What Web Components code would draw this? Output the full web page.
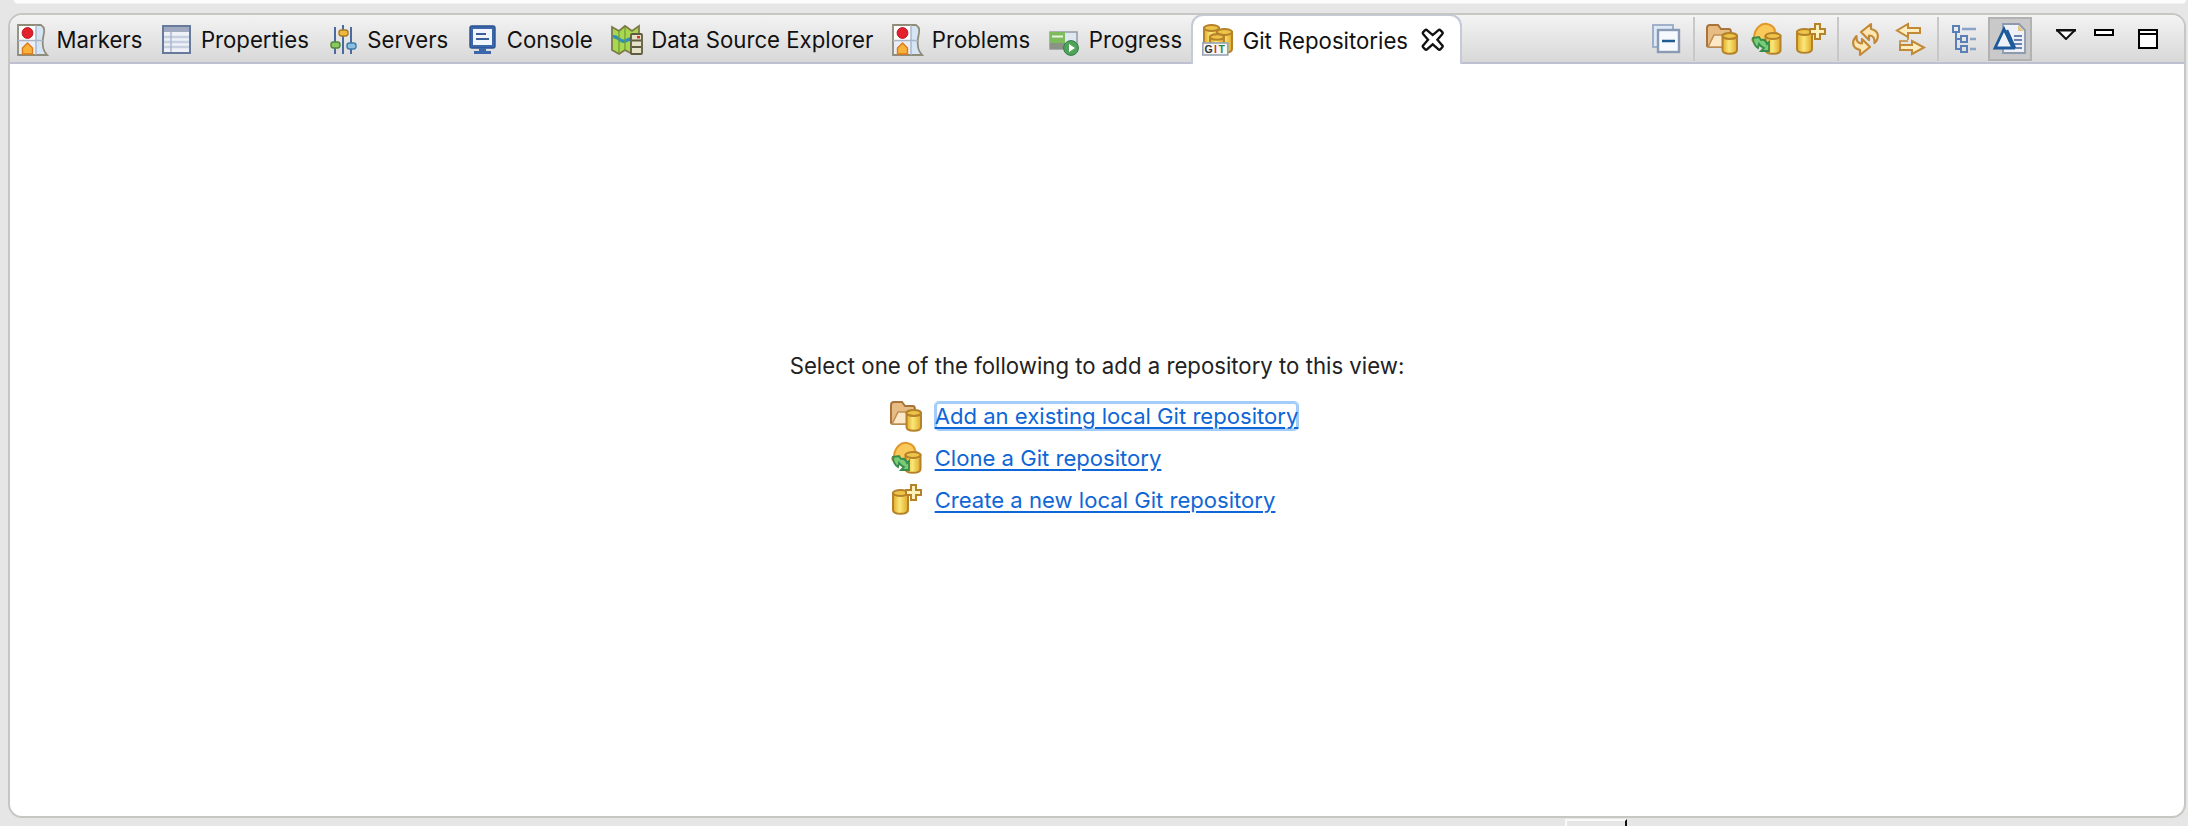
<!DOCTYPE html>
<html>
<head>
<meta charset="utf-8">
<title>Git Repositories</title>
<style>
  html, body { margin: 0; padding: 0; background: #e6e6e6; overflow: hidden; }
  body { height: 826px; font-family: Inter, "Liberation Sans", sans-serif; color: #111; }
</style>
</head>
<body>
<workbench-shell>
  <view-panel>
    <view-tab slot="tabs" icon="markers" label="Markers"></view-tab>
    <view-tab slot="tabs" icon="properties" label="Properties"></view-tab>
    <view-tab slot="tabs" icon="servers" label="Servers"></view-tab>
    <view-tab slot="tabs" icon="console" label="Console"></view-tab>
    <view-tab slot="tabs" icon="datasource" label="Data Source Explorer"></view-tab>
    <view-tab slot="tabs" icon="markers" label="Problems"></view-tab>
    <view-tab slot="tabs" icon="progress" label="Progress"></view-tab>
    <view-tab slot="tabs" icon="git" label="Git Repositories" active></view-tab>

    <tool-button slot="tools" icon="collapse"></tool-button>
    <tool-sep slot="tools"></tool-sep>
    <tool-button slot="tools" icon="folder"></tool-button>
    <tool-button slot="tools" icon="clone"></tool-button>
    <tool-button slot="tools" icon="create"></tool-button>
    <tool-sep slot="tools"></tool-sep>
    <tool-button slot="tools" icon="sync"></tool-button>
    <tool-button slot="tools" icon="arrows"></tool-button>
    <tool-sep slot="tools"></tool-sep>
    <tool-button slot="tools" icon="tree"></tool-button>
    <tool-button slot="tools" icon="link" pressed></tool-button>

    <window-controls slot="controls"></window-controls>

    <empty-repos>
      <repo-link icon="folder" focused>Add an existing local Git repository</repo-link>
      <repo-link icon="clone">Clone a Git repository</repo-link>
      <repo-link icon="create">Create a new local Git repository</repo-link>
    </empty-repos>
  </view-panel>
</workbench-shell>

<script>
  // gold cylinder used by most of the git icons
  const cyl = (x, y, w, h) => {
    const ry = w * 0.2;
    return `<path d="M${x} ${y}V${y + h - ry}C${x} ${y + h + ry * .7} ${x + w} ${y + h + ry * .7} ${x + w} ${y + h - ry}V${y}Z" fill="url(#gold)" stroke="#b5822a" stroke-width="2"/>
      <ellipse cx="${x + w / 2}" cy="${y}" rx="${w / 2}" ry="${ry}" fill="#eec448" stroke="#b5822a" stroke-width="2"/>`;
  };

  const swoosh = `M21 1L11 9L19 17V12.5C23 12.5 25 15 24.5 20C29 15.5 30 8 21 6Z`;

  const ICONS = {
    markers: `
      <path d="M2 1H25C30 4 28 9 27 14C26 21 27 27 31 31H2Z" fill="#d6e5f5" stroke="#8f8c78" stroke-width="1.8"/>
      <rect x="3" y="2" width="17" height="14" fill="#fff"/>
      <rect x="3" y="17" width="17" height="13" fill="#e9eef6"/>
      <path d="M20 1V31M2 16.5H27" stroke="#a9b4c4" stroke-width="1.4"/>
      <circle cx="11.5" cy="9" r="5.4" fill="#e3202c" stroke="#b81820"/>
      <path d="M11.5 19L16.5 24V30H6.5V24Z" fill="#f6b23a" stroke="#e07a18" stroke-width="1.4"/>`,
    properties: `
      <rect x="3" y="2" width="27" height="27" fill="#eef1f7" stroke="#687a9c" stroke-width="2"/>
      <rect x="4" y="3" width="25" height="5" fill="#a0a9bf"/>
      <path d="M4 13H29M4 18H29M4 23H29" stroke="#c6cfe0" stroke-width="2.4"/>
      <path d="M11 8V28" stroke="#aab4c8" stroke-width="1.4"/>`,
    servers: `
      <path d="M8 3V30M16 1V30M24 3V30" stroke="#4a6aa0" stroke-width="2"/>
      <rect x="4" y="18" width="9" height="6" rx="2.4" fill="#8cc860" stroke="#4d8a38" stroke-width="1.4"/>
      <rect x="12" y="6" width="9" height="6" rx="2.4" fill="#eeb840" stroke="#a87c20" stroke-width="1.4"/>
      <rect x="20" y="19" width="9" height="6" rx="2.4" fill="#8cc0e0" stroke="#3f7aa8" stroke-width="1.4"/>`,
    console: `
      <rect x="4" y="2" width="25" height="22" rx="2" fill="#3b67ab" stroke="#2d5290" stroke-width="1.4"/>
      <rect x="7" y="5" width="19" height="16" fill="#f2f5fb"/>
      <path d="M10 10H20M10 15H23" stroke="#3b5f9c" stroke-width="2"/>
      <path d="M13 24H20V27H25V30H8V27H13Z" fill="#3b67ab"/>`,
    datasource: `
      <path d="M1 3L8 7L14 2L21 7L28 2V20H23V28L21 30L14 26L8 30L1 26Z" fill="#a8d850" stroke="#7d7a48" stroke-width="1.8"/>
      <path d="M2 13C7 11 9 19 14 17S19 14 23 15" stroke="#2f8fb8" stroke-width="3.4" fill="none"/>
      <path d="M8 7V29M14 3V26" stroke="#6f9a30" stroke-width="1.2"/>
      <rect x="20" y="10" width="11" height="20" rx="1" fill="#e6e2c8" stroke="#5f5a40" stroke-width="1.8"/>
      <path d="M21 16.5H30M21 23H30" stroke="#5f5a40" stroke-width="1.8"/>
      <rect x="26" y="12" width="3" height="2.4" fill="#d83030"/>`,
    progress: `
      <rect x="2" y="8" width="27" height="17" fill="#dfe7f0" stroke="#8e969e" stroke-width="1.4"/>
      <rect x="2" y="8" width="15" height="11" fill="#7dbb5c"/>
      <path d="M4 12.5H15" stroke="#eaf6e0" stroke-width="2.2"/>
      <rect x="2" y="19" width="17" height="6" fill="#8b9484"/>
      <circle cx="23" cy="24" r="7.4" fill="#4fa45a" stroke="#2f7c40"/>
      <path d="M21 20L27 24L21 28Z" fill="#fff"/>`,
    git: `
      ${cyl(2, 4, 15, 18)}
      ${cyl(15, 8, 15, 20)}
      ${cyl(8, 13, 14, 10)}
      <rect x="0.8" y="19" width="25" height="12" fill="#f6f6f6" stroke="#98a4b4" stroke-width="1.6"/>
      <text x="13.4" y="29" text-anchor="middle" font-family="'Liberation Sans',sans-serif" font-weight="700" font-size="10.5" letter-spacing="1.4"><tspan fill="#333">G</tspan><tspan fill="#d8302c">I</tspan><tspan fill="#2f8a3c">T</tspan></text>`,
    collapse: `
      <rect x="3" y="2" width="20" height="22" fill="#dfe9f6" stroke="#9fb0c8" stroke-width="2"/>
      <rect x="8" y="7" width="21" height="22" fill="#f6f9fd" stroke="#8a9ab4" stroke-width="2.4"/>
      <path d="M12 18H25" stroke="#1f5a92" stroke-width="2.6"/>`,
    folder: `
      <path d="M1 23V5C1 3 2 2 4 2H12L15 6H23C25 6 25 8 25 12V24H3Z" fill="#e6bc82" stroke="#a9743a" stroke-width="2"/>
      <path d="M2 24L8 12H25L21 24Z" fill="#fce8c6" stroke="#c08e58" stroke-width="1.6"/>
      ${cyl(16.5, 13, 14.5, 17)}`,
    clone: `
      <path d="M4 14C5 5 11 0 17 1C22 2 25 5 25 9C29 11 31 16 28 20H6C2 19 1 16 4 14Z" fill="#fbc85a" stroke="#e0982c" stroke-width="2"/>
      ${cyl(15.5, 13, 15, 17)}
      <path d="M3 15L9 14L11 17C14 16 16 18 17 21L19 19V28H11L14 25C12 24 10 23 9 21L8 25C5 23 3 19 3 15Z" fill="#77cc78" stroke="#3a8a4a" stroke-width="1.8"/>`,
    create: `
      ${cyl(3, 9, 15, 20)}
      <path d="M21 1H26V6H31V11H26V16H21V11H16V6H21Z" fill="#fcefb8" stroke="#b5822a" stroke-width="2"/>`,
    sync: `
      <path d="${swoosh}" fill="#fde6b4" stroke="#c28a36" stroke-width="2.2" stroke-linejoin="round"/>
      <path d="${swoosh}" transform="rotate(180 15.5 16.5)" fill="#fde6b4" stroke="#c28a36" stroke-width="2.2" stroke-linejoin="round"/>`,
    arrows: `
      <path d="M14 1V5H26V10H14V14L3 7.5Z" fill="#fdeec2" stroke="#c28a36" stroke-width="2"/>
      <path d="M18 18V22H6V27H18V31L30 24.5Z" fill="#fdeec2" stroke="#c28a36" stroke-width="2"/>
      <path d="M14 14V17M6 22V18H14" fill="none" stroke="#c28a36" stroke-width="1.6"/>`,
    tree: `
      <g fill="none" stroke="#5a80b8" stroke-width="2">
        <rect x="3" y="3" width="6" height="6"/>
        <rect x="11" y="13" width="6" height="6"/>
        <rect x="11" y="23" width="6" height="6"/>
        <path d="M6 9V26H11M6 16H11"/>
      </g>
      <path d="M12 6H26M20 16H26M20 26H26" stroke="#8aa4c8" stroke-width="2.4"/>`,
    link: `
      <path d="M9 1H25L31 7V30H9Z" fill="#eef2f8" stroke="#8d9aae" stroke-width="1.8"/>
      <path d="M24 2V8H30Z" fill="#e4c880"/>
      <path d="M20 13H28M20 17H28M20 21H28M20 25H28" stroke="#6a83ac" stroke-width="1.8"/>
      <path d="M10 6L19 25H1Z" fill="#eef2f8" stroke="#1d5a9c" stroke-width="2.8"/>
      <path d="M13 7L21 25" stroke="#1d5a9c" stroke-width="2.4"/>`,
    close: `
      <path d="M3 5L5 3C6 2 7 2 8 3L15 9L22 3C23 2 24 2 25 3L27 5C28 6 28 7 27 8L21 15L27 22C28 23 28 24 27 25L25 27C24 28 23 28 22 27L15 21L8 27C7 28 6 28 5 27L3 25C2 24 2 23 3 22L9 15L3 8C2 7 2 6 3 5Z" fill="#fff" stroke="#111" stroke-width="3"/>`
  };

  class EclipseIcon extends HTMLElement {
    constructor() {
      super();
      const name = this.getAttribute("name");
      const size = this.getAttribute("size") || 32;
      this.attachShadow({ mode: "open" });
      this.shadowRoot.innerHTML = `
        <style>
          :host { display: block; width: ${size}px; height: ${size}px; flex: none; }
          svg { display: block; width: 100%; height: 100%; overflow: visible; }
        </style>
        <svg viewBox="0 0 32 32" xmlns="http://www.w3.org/2000/svg">
          <defs>
            <linearGradient id="gold" x1="0" x2="1" y1="0" y2="0">
              <stop offset="0" stop-color="#e0ac2c"/>
              <stop offset=".45" stop-color="#fbe878"/>
              <stop offset="1" stop-color="#dfa92a"/>
            </linearGradient>
          </defs>
          ${ICONS[name] || ""}
        </svg>`;
    }
  }
  customElements.define("eclipse-icon", EclipseIcon);

  class WorkbenchShell extends HTMLElement {
    constructor() {
      super();
      this.attachShadow({ mode: "open" });
      this.shadowRoot.innerHTML = `
        <style>
          :host { display: flex; flex-direction: column; height: 826px; }
          .above {
            height: 3px; margin: 0 2px 0 14px; background: #fdfdfd;
            border-radius: 0 0 10px 10px; border-bottom: 1px solid #f1f1f1;
          }
          .main { margin: 9px 2px 0 8px; height: 805px; display: flex; }
          .below { flex: 1; display: flex; align-items: flex-end; padding-left: 1565px; }
          .stub {
            width: 58px; height: 5px; border: 2px solid #fafafa; border-bottom: 0;
            border-right: 2px solid #111;
          }
        </style>
        <div class="above"></div>
        <div class="main"><slot></slot></div>
        <div class="below"><div class="stub"></div></div>`;
    }
  }
  customElements.define("workbench-shell", WorkbenchShell);

  class ViewPanel extends HTMLElement {
    constructor() {
      super();
      this.attachShadow({ mode: "open" });
      this.shadowRoot.innerHTML = `
        <style>
          :host {
            display: flex; flex-direction: column; flex: 1; box-sizing: border-box;
            border: 2px solid #c6c6c2; border-radius: 14px; background: #fff; overflow: hidden;
          }
          .bar {
            display: flex; align-items: stretch; height: 47px; padding-left: 6px;
            background: linear-gradient(#f3f3f3, #d8d8d8);
            border-bottom: 2px solid #bcc0d0;
          }
          .tabs { display: flex; align-items: stretch; }
          .tools { display: flex; align-items: stretch; margin-left: auto; height: 44px; margin-top: 2px; }
          .controls { display: flex; }
          .body { flex: 1; display: flex; }
        </style>
        <div class="bar">
          <div class="tabs"><slot name="tabs"></slot></div>
          <div class="tools"><slot name="tools"></slot></div>
          <div class="controls"><slot name="controls"></slot></div>
        </div>
        <div class="body"><slot></slot></div>`;
    }
  }
  customElements.define("view-panel", ViewPanel);

  class ViewTab extends HTMLElement {
    constructor() {
      super();
      const active = this.hasAttribute("active");
      this.attachShadow({ mode: "open" });
      this.shadowRoot.innerHTML = `
        <style>
          :host { display: flex; align-items: center; padding: 2px 18px 0 0; font-size: 22.2px; color: #111; white-space: nowrap; }
          :host([active]) {
            margin: -1px 0 -2px -9px; padding: 0 14px 0 9px; background: #fff;
            border: 2px solid #c4cad8; border-bottom: 0; border-radius: 12px 12px 0 0;
          }
          .label { margin-left: 8.5px; }
          .close { margin-left: 13px; }
        </style>
        <eclipse-icon name="${this.getAttribute("icon")}"></eclipse-icon>
        <span class="label">${this.getAttribute("label")}</span>
        ${active ? `<eclipse-icon class="close" name="close" size="25"></eclipse-icon>` : ""}`;
    }
  }
  customElements.define("view-tab", ViewTab);

  class ToolButton extends HTMLElement {
    constructor() {
      super();
      this.attachShadow({ mode: "open" });
      this.shadowRoot.innerHTML = `
        <style>
          :host { display: flex; align-items: center; justify-content: center; width: 44px; box-sizing: border-box; }
          :host([pressed]) { background: #c9c9c9; border: 2px solid #b2b2b2; }
        </style>
        <eclipse-icon name="${this.getAttribute("icon")}"></eclipse-icon>`;
    }
  }
  customElements.define("tool-button", ToolButton);

  class ToolSep extends HTMLElement {
    constructor() {
      super();
      this.attachShadow({ mode: "open" });
      this.shadowRoot.innerHTML = `
        <style>
          :host { display: block; width: 2px; margin: 0 5px; background: #c8c8c8; }
        </style>`;
    }
  }
  customElements.define("tool-sep", ToolSep);

  class WindowControls extends HTMLElement {
    constructor() {
      super();
      this.attachShadow({ mode: "open" });
      this.shadowRoot.innerHTML = `
        <style>
          :host { display: flex; padding: 14px 26px 0 24px; align-items: flex-start; }
          svg { display: block; }
          .min { margin: 0 24px 0 18px; }
        </style>
        <svg width="20" height="11" viewBox="0 0 20 11">
          <path d="M1 1H19L10 10Z" fill="#fff" stroke="#111" stroke-width="2"/>
          <path d="M0 1H20" stroke="#111" stroke-width="3"/>
        </svg>
        <svg class="min" width="20" height="7" viewBox="0 0 20 7">
          <rect x="1" y="1" width="18" height="5" fill="#fff" stroke="#000" stroke-width="2"/>
        </svg>
        <svg width="20" height="20" viewBox="0 0 20 20">
          <rect x="1" y="1" width="18" height="18" fill="#fff" stroke="#000" stroke-width="2"/>
          <path d="M1 5H19" stroke="#000" stroke-width="2"/>
        </svg>`;
    }
  }
  customElements.define("window-controls", WindowControls);

  class EmptyRepos extends HTMLElement {
    constructor() {
      super();
      this.attachShadow({ mode: "open" });
      this.shadowRoot.innerHTML = `
        <style>
          :host {
            display: flex; flex-direction: column; align-items: center; flex: 1;
            padding-top: 287px; font-size: 22.2px; color: #222;
          }
          .list { display: flex; flex-direction: column; gap: 10px; margin: 19px 6px 0 0; font-size: 22.1px; }
          p { margin: 0; line-height: 30px; }
        </style>
        <p>Select one of the following to add a repository to this view:</p>
        <div class="list"><slot></slot></div>`;
    }
  }
  customElements.define("empty-repos", EmptyRepos);

  class RepoLink extends HTMLElement {
    constructor() {
      super();
      this.attachShadow({ mode: "open" });
      this.shadowRoot.innerHTML = `
        <style>
          :host { display: flex; align-items: center; gap: 13px; height: 32px; }
          a { color: #0f66d6; text-decoration: underline; text-decoration-thickness: 2px; text-underline-offset: 3px; line-height: 28px; border-radius: 4px; }
          :host([focused]) a { box-shadow: 0 0 0 1px #a3cdf8, inset 0 0 0 2px #a3cdf8; }
        </style>
        <eclipse-icon name="${this.getAttribute("icon")}"></eclipse-icon>
        <a href="#"><slot></slot></a>`;
    }
  }
  customElements.define("repo-link", RepoLink);
</script>
</body>
</html>
